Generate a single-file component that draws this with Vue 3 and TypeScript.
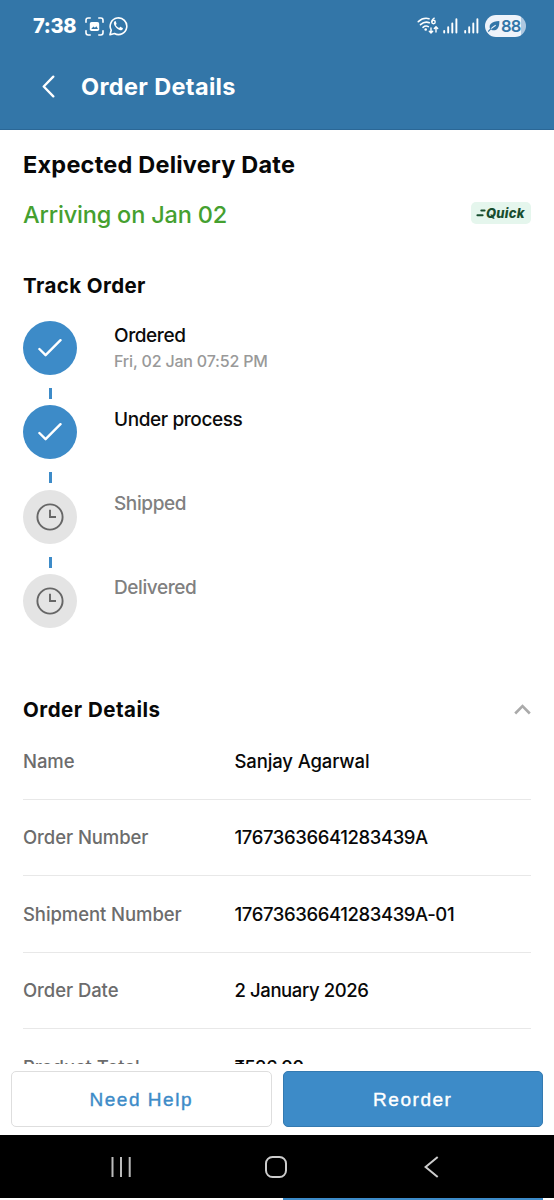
<script setup lang="ts">
interface Step {
  label: string
  time?: string
  done: boolean
}

interface Detail {
  label: string
  value: string
  cls: string
}

const steps: Step[] = [
  { label: 'Ordered', time: 'Fri, 02 Jan 07:52 PM', done: true },
  { label: 'Under process', done: true },
  { label: 'Shipped', done: false },
  { label: 'Delivered', done: false },
]

const details: Detail[] = [
  { label: 'Name', value: 'Sanjay Agarwal', cls: 'name' },
  { label: 'Order Number', value: '17673636641283439A', cls: 'number' },
  { label: 'Shipment Number', value: '17673636641283439A-01', cls: 'shipment' },
  { label: 'Order Date', value: '2 January 2026', cls: 'date' },
  { label: 'Product Total', value: '₹526.00', cls: 'total' },
]
</script>

<template>
  <div class="screen">
    <header class="top">
      <div class="status">
        <span class="clock">7:38</span>
        <svg class="shot" width="19" height="19" viewBox="0 0 19 19" fill="none">
          <path d="M1 5.2V3.2Q1 1 3.2 1H5.2M13.8 1h2Q18 1 18 3.2v2M18 13.8v2Q18 18 15.8 18h-2M5.2 18h-2Q1 18 1 15.8v-2" stroke="#fff" stroke-width="1.6" stroke-linecap="round" />
          <rect x="4.8" y="5" width="9.4" height="9" rx="1.8" fill="#fff" />
          <path d="M6.2 12 8.4 9.4l1.5 1.3 1.5-1.5 1.6 2.8z" fill="#3376a8" />
        </svg>
        <svg class="whatsapp" width="19" height="20" viewBox="0 0 19 20" fill="none">
          <path d="M1 18.7 2.2 14.2A8.3 8.3 0 1 1 5.5 17.5Z" stroke="#fff" stroke-width="1.6" stroke-linejoin="round" />
          <path d="M6.6 5.1c-.4-.1-.9.1-1.2.5-.9 1.1-.6 2.7.3 4.2 1.1 1.9 2.8 3.5 4.9 4.2 1.5.5 2.7.1 3.2-1 .2-.5.2-1-.1-1.1l-2-1c-.3-.1-.5 0-.7.2l-.8.9c-1.5-.6-2.7-1.7-3.4-3l.6-.8c.2-.2.2-.5.1-.7z" fill="#fff" />
        </svg>
        <span class="grow"></span>
        <svg class="wifi" width="23" height="18" viewBox="0 0 23 18" fill="none" stroke="#fff" stroke-linecap="round">
          <path d="M1.3 4.6Q6.2.2 12 1.7M3.5 7.6Q7.7 3.9 12.3 5.7M6 10.3q2.6-2.1 5.3-.7" stroke-width="1.6" />
          <circle cx="8.7" cy="12.5" r="1.3" fill="#fff" stroke="none" />
          <path d="M17.2 1.2q-2.3 1.3-2.3 3.5" stroke-width="1.4" />
          <circle cx="16.5" cy="5" r="1.7" stroke-width="1.4" />
          <path d="M14 11v5M12.3 14.3 14 16l1.7-1.7M19 15v-5M17.3 11.5 19 9.8l1.7 1.7" stroke-width="1.4" />
        </svg>
        <svg v-for="n in 2" :key="n" class="signal" width="15" height="16" viewBox="0 0 15 16" fill="none" stroke="#fff" stroke-width="1.9" stroke-linecap="round">
          <path d="M1.2 13v1.5M5.2 9.3v5.2M9.3 5.5v9M13.4 1.3v13.2" />
        </svg>
        <span class="battery">
          <svg width="12" height="12" viewBox="0 0 12 12">
            <path d="M2 8.700C.5 4.500 3.500 1.500 11.300 1c.4 6.800-2.500 10.400-7.800 9Z" fill="#3376a8" />
            <path d="M.8 11.200Q3.500 7.500 7.700 5.200" fill="none" stroke="#eef3fa" stroke-width="1.1" />
            <path d="M.6 11.200 2.800 8.800" stroke="#3376a8" stroke-width="1.2" stroke-linecap="round" />
          </svg>
          <span>88</span>
        </span>
      </div>
      <div class="title-bar">
        <svg width="13" height="23" viewBox="0 0 13 23" fill="none">
          <path d="M11.3 1.6 1.7 11.5l9.6 9.9" stroke="#fff" stroke-width="2.3" stroke-linecap="round" stroke-linejoin="round" />
        </svg>
        <h1>Order Details</h1>
      </div>
    </header>

    <main class="content">
      <h2 class="expected">Expected Delivery Date</h2>
      <div class="arrival">
        <span class="arriving">Arriving on Jan 02</span>
        <span class="quick">
          <svg width="10" height="8" viewBox="0 0 10 8" fill="none" stroke="#174d2f" stroke-width="2" stroke-linecap="round">
            <path d="M5.3 1.6h3.3M1.4 6.2h5.2" />
          </svg>
          <span>Quick</span>
        </span>
      </div>

      <h3 class="track">Track Order</h3>
      <ol class="steps">
        <li v-for="step in steps" :key="step.label" :class="['step', { done: step.done }]">
          <div class="rail">
            <span class="dot">
              <svg v-if="step.done" width="24" height="18" viewBox="0 0 24 18" fill="none">
                <path d="M1.4 10 7.6 16.2 22.5 1.2" stroke="#fff" stroke-width="2.4" stroke-linecap="round" stroke-linejoin="round" />
              </svg>
              <svg v-else width="28" height="28" viewBox="0 0 28 28" fill="none" stroke="#666">
                <circle cx="14" cy="14" r="12.6" stroke-width="1.9" />
                <path d="M14 6.7V14h6" stroke-width="1.9" />
              </svg>
            </span>
            <span class="dash"></span>
          </div>
          <div class="info">
            <span class="label">{{ step.label }}</span>
            <span v-if="step.time" class="time">{{ step.time }}</span>
          </div>
        </li>
      </ol>

      <div class="details-head">
        <h3>Order Details</h3>
        <svg width="17" height="11" viewBox="0 0 17 11" fill="none">
          <path d="M1.2 9.5 8.5 2l7.3 7.5" stroke="#aaa" stroke-width="2.6" />
        </svg>
      </div>
      <dl class="details">
        <div v-for="item in details" :key="item.label" :class="['detail', item.cls]">
          <dt>{{ item.label }}</dt>
          <dd>{{ item.value }}</dd>
        </div>
      </dl>
    </main>

    <footer class="actions">
      <button class="help" type="button">Need Help</button>
      <button class="reorder" type="button">Reorder</button>
    </footer>

    <nav class="system-nav">
      <svg width="21" height="22" viewBox="0 0 21 22" stroke="#bbb" stroke-width="2">
        <path d="M1.500 1v20M10 1v20M18.700 1v20" />
      </svg>
      <svg class="home" width="22" height="22" viewBox="0 0 22 22" fill="none" stroke="#ccc" stroke-width="2">
        <rect x="1" y="1" width="20" height="20" rx="6.5" />
      </svg>
      <svg width="15" height="22" viewBox="0 0 15 22" fill="none" stroke="#ccc" stroke-width="2">
        <path d="M13.700 1 1.600 11l12.100 10" />
      </svg>
    </nav>
    <div class="edge"><span></span></div>
  </div>
</template>

<style>
body {
  margin: 0;
  background: #fff;
}
</style>

<style scoped>
.screen {
  width: 554px;
  height: 1200px;
  display: flex;
  flex-direction: column;
  overflow: hidden;
  background: #fff;
  color: #080808;
  font-family: Inter, Roboto, 'Liberation Sans', sans-serif;
}
h1, h2, h3, dl, dd, ol {
  margin: 0;
  padding: 0;
  white-space: nowrap;
}
svg {
  display: block;
  flex: none;
}
.top {
  flex: none;
  height: 129.5px;
  box-sizing: border-box;
  background: #3376a8;
  border-bottom: 1px solid #2b6796;
  color: #fff;
}
.status {
  height: 52px;
  display: flex;
  align-items: center;
  padding: 0 28px 0 33px;
}
.clock {
  width: 51.5px;
  font-size: 20px;
  font-weight: 800;
  letter-spacing: -0.3px;
}
.whatsapp {
  margin-left: 5px;
}
.grow {
  flex: 1;
}
.wifi {
  margin-right: 3px;
}
.signal {
  margin-right: 6px;
}
.battery {
  width: 41px;
  height: 22px;
  box-sizing: border-box;
  margin-top: -1px;
  padding-left: 3px;
  border-radius: 11px;
  background: linear-gradient(90deg, #eef3fa 36px, #adc7e0 36px);
  display: flex;
  align-items: center;
  gap: 1px;
  color: #3376a8;
  font-size: 16.5px;
  font-weight: 600;
  letter-spacing: -0.7px;
}
.title-bar {
  height: 69px;
  display: flex;
  align-items: center;
  padding-left: 42px;
  gap: 26px;
}
.title-bar h1 {
  font-size: 23.5px;
  line-height: 28px;
  font-weight: 700;
  letter-spacing: 0.35px;
}
.content {
  flex: none;
  height: 934px;
  box-sizing: border-box;
  padding: 20.5px 23px 0;
  overflow: hidden;
}
.expected {
  font-size: 23.5px;
  line-height: 30px;
  font-weight: 700;
  letter-spacing: 0.22px;
}
.arrival {
  margin-top: 19px;
  height: 30px;
  display: flex;
  justify-content: space-between;
  align-items: center;
}
.arriving {
  color: #45a02f;
  font-size: 23.5px;
  font-weight: 500;
  letter-spacing: -0.18px;
}
.quick {
  width: 60px;
  height: 22px;
  box-sizing: border-box;
  margin-top: -3px;
  padding-left: 5px;
  border-radius: 5px;
  background: #e5f6ed;
  color: #174d2f;
  display: flex;
  align-items: center;
  font-size: 13px;
  font-weight: 800;
  font-style: italic;
  letter-spacing: 0.25px;
}
.track {
  margin-top: 45px;
  font-size: 20.5px;
  line-height: 24px;
  font-weight: 700;
  letter-spacing: 0.4px;
}
.steps {
  margin-top: 23px;
  list-style: none;
}
.step {
  height: 84.3px;
  display: flex;
  gap: 37px;
  color: #808080;
}
.rail {
  width: 54px;
  display: flex;
  flex-direction: column;
  align-items: center;
}
.dot {
  width: 54px;
  height: 54px;
  border-radius: 50%;
  background: #e4e4e4;
  display: flex;
  align-items: center;
  justify-content: center;
}
.done .dot {
  background: #3d8bc8;
}
.dash {
  width: 3px;
  height: 11px;
  margin: 13px 0 0 1px;
  background: #3d8bc8;
}
.step:last-child .dash {
  display: none;
}
.info {
  display: flex;
  flex-direction: column;
}
.label {
  font-size: 19px;
  line-height: 26px;
  margin-top: 1.6px;
  font-weight: 500;
  letter-spacing: -0.4px;
}
.done .label {
  color: #0b0b0b;
}
.time {
  color: #999;
  font-size: 16px;
  line-height: 24px;
  margin-top: 0.6px;
  font-weight: 500;
  letter-spacing: -0.18px;
}
.details-head {
  margin-top: 39.8px;
  height: 24px;
  display: flex;
  align-items: center;
  justify-content: space-between;
}
.details-head h3 {
  font-size: 20.5px;
  font-weight: 700;
  letter-spacing: 0.5px;
}
.details {
  margin-top: 1.2px;
}
.detail {
  height: 76.5px;
  box-sizing: border-box;
  border-bottom: 1.5px solid #e8e8e8;
  display: grid;
  grid-template-columns: 211.5px 1fr;
  align-items: center;
  font-size: 18.5px;
  font-weight: 500;
  color: #080808;
}
.detail dt {
  color: #6c6c6c;
  letter-spacing: -0.08px;
}
.detail dd {
  letter-spacing: -0.4px;
}
.detail.name dd {
  letter-spacing: -0.13px;
}
.detail.total dd {
  letter-spacing: -0.55px;
}
.actions {
  flex: none;
  height: 71.5px;
  box-sizing: border-box;
  padding: 7.5px 11px 8px;
  display: grid;
  grid-template-columns: 1fr 1fr;
  gap: 11px;
}
.actions button {
  box-sizing: border-box;
  padding: 1px 0 0;
  border-radius: 5px;
  border: 1px solid #dedede;
  background: #fff;
  color: #3d8bc8;
  font-family: 'Liberation Sans', Arial, sans-serif;
  font-size: 19px;
  font-weight: 500;
  letter-spacing: 1.55px;
  -webkit-text-stroke: 0.4px currentColor;
}
.actions .reorder {
  background: #3d8bc8;
  border-color: #347ab1;
  color: #fff;
}
.system-nav {
  flex: none;
  height: 63px;
  box-sizing: border-box;
  background: #000;
  display: flex;
  align-items: center;
  justify-content: space-between;
  padding: 1px 115px 0 111px;
}
.home {
  margin-right: 4px;
}
.edge {
  height: 2px;
  padding: 0 11px 0 283px;
}
.edge span {
  display: block;
  height: 2px;
  background: #3d8bc8;
}
</style>
